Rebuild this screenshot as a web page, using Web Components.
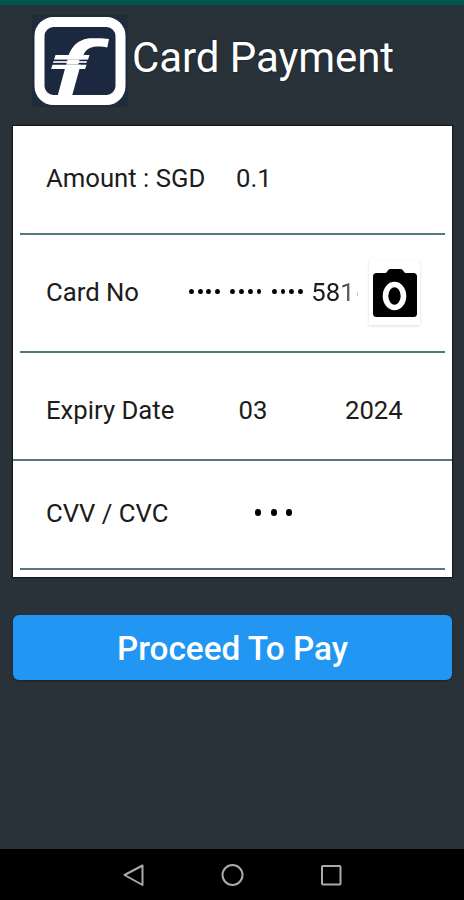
<!DOCTYPE html>
<html lang="en">
<head>
<meta charset="utf-8">
<title>Card Payment</title>
<style>
html, body { margin: 0; height: 100%; background: #293239; }
body { font-family: Roboto, "Liberation Sans", sans-serif; overflow: hidden; }
</style>
</head>
<body>
<payment-screen></payment-screen>
<script>
function define(name, html) {
  const template = document.createElement('template');
  template.innerHTML = html;
  customElements.define(name, class extends HTMLElement {
    constructor() {
      super();
      this.attachShadow({ mode: 'open' }).append(template.content.cloneNode(true));
    }
  });
}

define('brand-logo', `
<style>:host{display:block;width:96px;height:92px} svg{display:block}</style>
<svg width="96" height="92" viewBox="0 0 96 92">
  <rect width="96" height="92" fill="#202c39"/>
  <rect x="7.5" y="7" width="81" height="78" rx="14" fill="#1c2840" stroke="#fff" stroke-width="10"/>
  <path d="M25.300 82 L34.500 48 C37 34 45 23.300 60 23.300 C67 23 73 23.200 77 24 L75.300 32.500 C70 31.500 66 31.300 61 32 C54 33.500 51.500 38 50 45 L39.700 82 Z" fill="#fff"/>
  <path d="M23.500 40h34l-1.500 4.700h-34z M20.600 49.500h34l-1.500 4.500h-34z" fill="#fff"/>
  <path d="M21.600 44.700h34l-1.200 4.800h-34z" fill="#1c2840"/>
  <path d="M21.500 46.100h33.500l-.5 1.800h-33.500z" fill="#d6dae0"/>
  <path d="M35.500 44.700h12l-1.200 4.800h-12z" fill="#fff"/>
</svg>`);

define('app-header', `
<style>
:host{display:flex;align-items:flex-start;height:121px;box-sizing:border-box;padding:10px 0 0 32px;background:#293239}
h1{margin:18px 0 0 4px;font-size:42px;line-height:50px;letter-spacing:-.07px;font-weight:400;color:#fff;white-space:nowrap;text-shadow:0 0 2px #111a20}
</style>
<brand-logo></brand-logo><h1><slot></slot></h1>`);

define('pay-card', `
<style>:host{display:block;margin:0 12px 0 13px;height:451px;background:#fff;box-shadow:0 0 1px 1px #11191f}</style>
<slot></slot>`);

define('pay-row', `
<style>
:host{display:grid;grid-template-columns:var(--cols);align-items:center;box-sizing:border-box;height:var(--h);
padding:0 26px 0 26px;margin:0 7px;border-bottom:2px solid #547880;font-size:25.700px;line-height:30px;color:#1c1c1c;white-space:nowrap}
:host([wide]){margin:0;padding:0 33px}
</style>
<slot></slot>`);

define('masked-number', `
<style>
:host{display:flex;align-items:center;gap:10.500px}
.group{display:flex;gap:3.800px}
i{width:4.900px;height:5.600px;border-radius:50%;background:#000}
span{margin-left:-2px;width:45px;overflow:hidden;-webkit-mask-image:linear-gradient(90deg,#000 65%,#0007)}
/* faded edge of the digit that is cut off by the field */
b{width:1.500px;height:4px;margin:5px 0 0 -10px;background:#ccc}
</style>
<div class="group"><i></i><i></i><i></i><i></i></div>
<div class="group"><i></i><i></i><i></i><i></i></div>
<div class="group"><i></i><i></i><i></i><i></i></div>
<span><slot></slot></span><b></b>`);

define('masked-code', `
<style>:host{display:flex;gap:9.500px} i{width:6px;height:6.500px;border-radius:50%;background:#000}</style>
<i></i><i></i><i></i>`);

define('scan-button', `
<style>
:host{display:block;width:51px;height:65px;background:#fff;box-shadow:0 1px 3px #0002}
svg{display:block}
</style>
<svg width="51" height="65" viewBox="0 0 51 65">
  <path d="M7.500 13h9q1 0 2-2t3-2h10q2 0 3 2t2 2h8q3.500 0 3.500 3.500v37q0 3.500-3.500 3.500h-37q-3.500 0-3.500-3.500v-37q0-3.500 3.500-3.500z" fill="#000"/>
  <ellipse cx="25.500" cy="36" rx="9" ry="11.500" fill="#000" stroke="#fff" stroke-width="5.600"/>
</svg>`);

define('pay-button', `
<style>
:host{display:block;margin:38px 12px 0 13px;height:65px}
button{display:block;width:100%;height:100%;border:0;border-radius:6px;padding:3px 0 0;background:#2196f3;color:#fff;
font:500 33.300px/38px Roboto,"Liberation Sans",sans-serif;box-shadow:0 1px 2px #17212a}
</style>
<button><slot></slot></button>`);

define('system-nav', `
<style>
:host{display:flex;justify-content:center;align-items:center;gap:75px;height:51px;background:#000;margin-top:auto}
svg{display:block;fill:none;stroke:#aaa;stroke-width:2}
</style>
<svg width="24" height="24"><path d="M3.500 12 L21.500 2.500 V22 Z" stroke-linejoin="round"/></svg>
<svg width="24" height="24"><circle cx="12.500" cy="12" r="10"/></svg>
<svg width="24" height="24"><rect x="3" y="3" width="18.500" height="18.500" rx="1"/></svg>`);

define('payment-screen', `
<style>
:host{display:flex;flex-direction:column;width:464px;height:900px;background:#293239}
.status{height:5px;background:#00574b;flex:none}
.amount{--cols:190px 1fr;--h:109px}
.number{--cols:143px 180px auto;--h:118px}
.expiry{--cols:192.500px 106.500px auto;--h:108px}
.cvc{--cols:209px auto;--h:109px}
.amount>*{margin-top:-3px}
.number>*{margin-top:-1px}
.number>span,.number>masked-number{margin-top:-3px}
.expiry>*{margin-top:8px}
.cvc>*{margin-top:-4px}
</style>
<div class="status"></div>
<app-header>Card Payment</app-header>
<pay-card>
  <pay-row class="amount"><span>Amount : SGD</span><span>0.1</span></pay-row>
  <pay-row class="number"><span>Card No</span><masked-number>581</masked-number><scan-button></scan-button></pay-row>
  <pay-row class="expiry" wide><span>Expiry Date</span><span>03</span><span>2024</span></pay-row>
  <pay-row class="cvc"><span>CVV / CVC</span><masked-code></masked-code></pay-row>
</pay-card>
<pay-button>Proceed To Pay</pay-button>
<system-nav></system-nav>`);
</script>
</body>
</html>
